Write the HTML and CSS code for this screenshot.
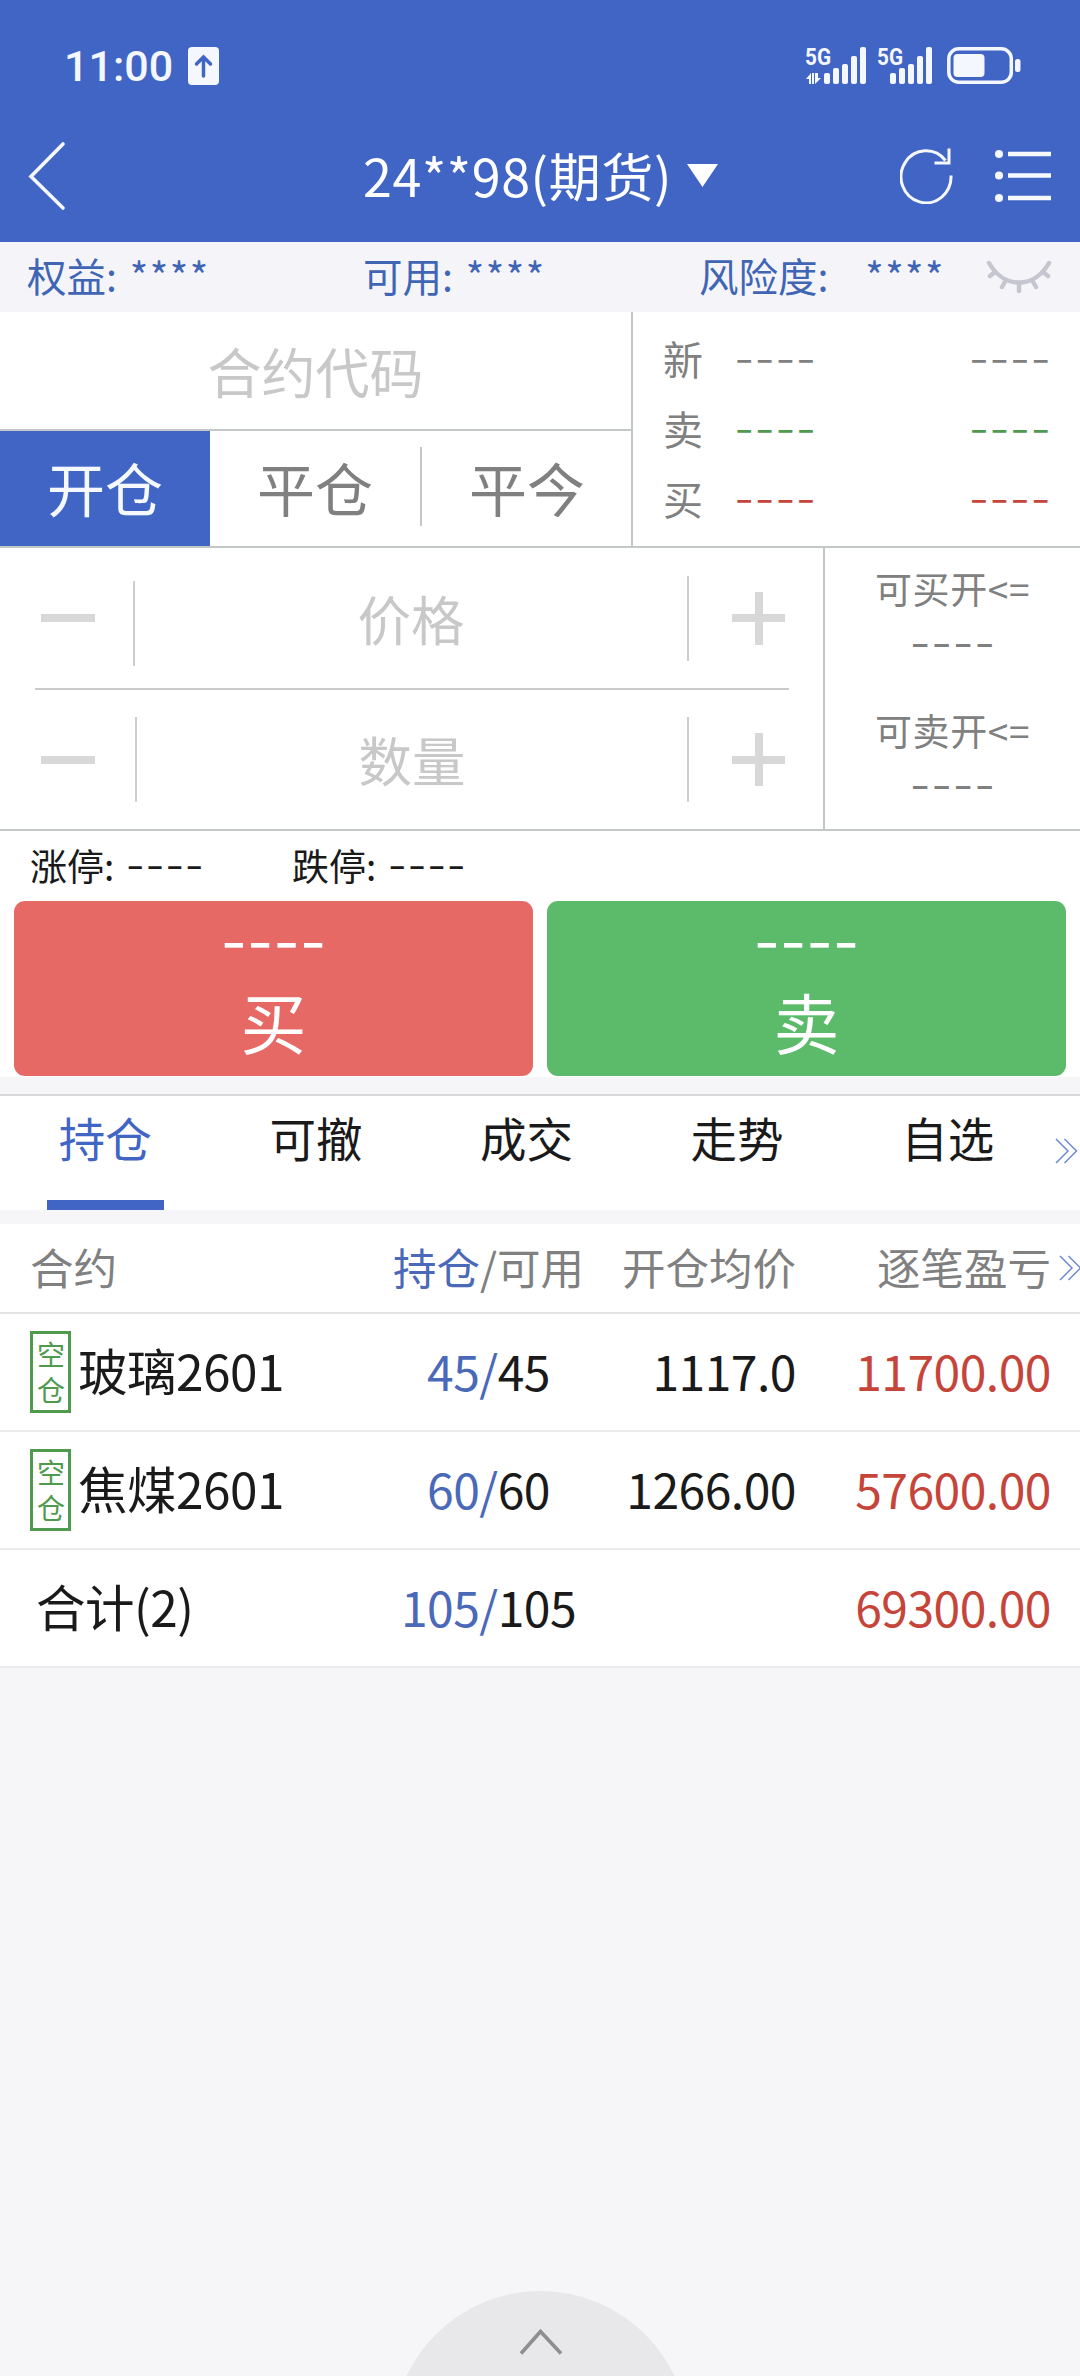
FILE: index.html
```html
<!DOCTYPE html>
<html lang="zh-CN">
<head>
    <meta charset="UTF-8">
    <meta name="viewport" content="width=device-width, initial-scale=1.0">
    <title>期货交易</title>
    <link rel="stylesheet" href="styles.css">
</head>
<body>
    <div class="top">
        <div class="status-bar">
            <span class="time">11:00</span>
            <svg class="upload" width="31" height="38" viewBox="0 0 31 38">
                <rect width="31" height="38" rx="4" fill="#f5f7ff"/>
                <path d="M15.5 29V11M8.5 17l7-7 7 7" fill="none" stroke="#4165c5" stroke-width="3.5" stroke-linecap="round"/>
            </svg>
            <svg class="signal" width="62" height="48" viewBox="0 -10 62 48" fill="#f5f7ff">
                <text class="net" x="0" y="18" textLength="26" lengthAdjust="spacingAndGlyphs">5G</text>
                <path d="M1 32l5-6v11H4v-5zM10 26v11l6-6h-3v-5zM7 26h2v11H7z"/>
                <rect x="19" y="26" width="6" height="11" rx="2"/>
                <rect x="28" y="21" width="6" height="16" rx="2"/>
                <rect x="37" y="17" width="6" height="20" rx="2"/>
                <rect x="46" y="9" width="6" height="28" rx="2"/>
                <rect x="55" y="0" width="6" height="37" rx="2"/>
            </svg>
            <svg class="signal" width="56" height="48" viewBox="0 -10 56 48" fill="#f5f7ff">
                <text class="net" x="0" y="18" textLength="26" lengthAdjust="spacingAndGlyphs">5G</text>
                <rect x="13" y="26" width="6" height="11" rx="2"/>
                <rect x="22" y="21" width="6" height="16" rx="2"/>
                <rect x="31" y="17" width="6" height="20" rx="2"/>
                <rect x="40" y="9" width="6" height="28" rx="2"/>
                <rect x="49" y="0" width="6" height="37" rx="2"/>
            </svg>
            <svg class="battery" width="74" height="38" viewBox="0 0 74 38">
                <rect x="1.8" y="1.8" width="62.5" height="33.5" rx="10" fill="none" stroke="#f5f7ff" stroke-width="3.5"/>
                <rect x="6.5" y="7" width="31" height="23" rx="4" fill="#f5f7ff"/>
                <rect x="68" y="12" width="5.5" height="13" rx="2.5" fill="#f5f7ff"/>
            </svg>
        </div>
        <div class="nav-bar">
            <svg class="back" width="38" height="70" viewBox="0 0 38 70">
                <path d="M35 3L3 35.500L35 67" fill="none" stroke="#f5f9ff" stroke-width="3.6" stroke-linecap="round"/>
            </svg>
            <div class="account">
                <span>24**98(期货)</span>
                <svg width="31" height="23" viewBox="0 0 31 23"><path d="M0 0h31L15.500 23z" fill="#fff"/></svg>
            </div>
            <svg class="refresh" width="54" height="56" viewBox="0 0 54 56" fill="none" stroke="#f5f9ff" stroke-width="3">
                <path d="M51 27.500A25 26 0 1 1 45.500 12.500"/>
                <path d="M49 0.500V15H34.500"/>
            </svg>
            <svg class="menu" width="58" height="56" viewBox="0 0 58 56">
                <g fill="#f5f9ff">
                    <circle cx="5" cy="6" r="4"/>
                    <circle cx="5" cy="27.500" r="4"/>
                    <circle cx="5" cy="50" r="4"/>
                </g>
                <path d="M14 6h43M14 27.500h43M14 50h43" stroke="#f5f9ff" stroke-width="4.500"/>
            </svg>
        </div>
    </div>

    <div class="funds">
        <div class="fund">权益: <span class="mask">****</span></div>
        <div class="fund">可用: <span class="mask">****</span></div>
        <div class="fund risk">风险度: <span class="mask">****</span></div>
        <svg class="eye" width="66" height="34" viewBox="0 0 66 34" fill="none" stroke="#c6c6d1" stroke-width="4.500" stroke-linecap="round">
            <path d="M3 3C18 29 48 29 63 3"/>
            <path d="M9 12l-5 4M20 20l-4 7M33 23v8M46 20l4 7M57 12l5 4"/>
        </svg>
    </div>

    <div class="contract">
        <div class="contract-left">
            <div class="code">合约代码</div>
            <div class="modes">
                <div class="mode active">开仓</div>
                <div class="mode">平仓</div>
                <div class="mode split">平今</div>
            </div>
        </div>
        <div class="quotes">
            <div class="quote"><span>新</span><span class="dash">----</span><span class="dash last">----</span></div>
            <div class="quote green"><span>卖</span><span class="dash">----</span><span class="dash last">----</span></div>
            <div class="quote red"><span>买</span><span class="dash">----</span><span class="dash last">----</span></div>
        </div>
    </div>

    <div class="order">
        <div class="inputs">
            <div class="stepper">
                <div class="minus"></div>
                <div class="value">价格</div>
                <div class="plus"></div>
            </div>
            <div class="stepper amount">
                <div class="minus"></div>
                <div class="value">数量</div>
                <div class="plus"></div>
            </div>
        </div>
        <div class="limits">
            <div class="limit">可买开&lt;=<span class="dash">----</span></div>
            <div class="limit">可卖开&lt;=<span class="dash">----</span></div>
        </div>
    </div>

    <div class="range">
        <div class="range-item">涨停: <span class="dash">----</span></div>
        <div class="range-item">跌停: <span class="dash">----</span></div>
    </div>

    <div class="actions">
        <div class="action buy"><span class="dash">----</span><span class="label">买</span></div>
        <div class="action sell"><span class="dash">----</span><span class="label">卖</span></div>
    </div>

    <div class="tabs">
        <div class="tab active">持仓</div>
        <div class="tab">可撤</div>
        <div class="tab">成交</div>
        <div class="tab">走势</div>
        <div class="tab">自选</div>
        <svg class="more" width="24" height="26" viewBox="0 0 24 26" fill="none" stroke="#6f8bd0" stroke-width="1.500">
            <path d="M1 1l12 12L1 25M9.500 1l12 12-12 12"/>
        </svg>
    </div>

    <div class="positions">
        <div class="row head">
            <div class="name">合约</div>
            <div class="volume"><span class="blue">持仓</span>/可用</div>
            <div class="price">开仓均价</div>
            <div class="profit">逐笔盈亏</div>
            <svg class="more" width="24" height="26" viewBox="0 0 24 26" fill="none" stroke="#6f8bd0" stroke-width="1.500">
                <path d="M1 1l12 12L1 25M9.500 1l12 12-12 12"/>
            </svg>
        </div>
        <div class="row">
            <div class="name"><span class="badge">空仓</span><span class="title">玻璃2601</span></div>
            <div class="volume"><span class="blue">45/</span>45</div>
            <div class="price">1117.0</div>
            <div class="profit">11700.00</div>
        </div>
        <div class="row">
            <div class="name"><span class="badge">空仓</span><span class="title">焦煤2601</span></div>
            <div class="volume"><span class="blue">60/</span>60</div>
            <div class="price">1266.00</div>
            <div class="profit">57600.00</div>
        </div>
        <div class="row total">
            <div class="name"><span class="title">合计(2)</span></div>
            <div class="volume"><span class="blue">105/</span>105</div>
            <div class="price"></div>
            <div class="profit">69300.00</div>
        </div>
    </div>

    <svg class="pull-up" width="297" height="85" viewBox="0 0 297 85">
        <circle cx="148.500" cy="148" r="148" fill="#e8e8ea"/>
        <path d="M129 62.500L148.500 40.500L169 62.500" fill="none" stroke="#8e8e90" stroke-width="3.600"/>
    </svg>
</body>
</html>
```
FILE: styles.css
```css
* {
    box-sizing: border-box;
}

body {
    display: flex;
    flex-direction: column;
    width: 1080px;
    height: 2376px;
    margin: 0;
    overflow: hidden;
    background: #f6f6f9;
    color: #1a1a1a;
    font-family: 'Noto Sans CJK SC', 'Noto Sans', sans-serif;
    font-size: 48px;
    line-height: 1;
    white-space: nowrap;
}

svg {
    display: block;
    flex: none;
}

/* 占位横线 */
.dash {
    font-family: Inter, sans-serif;
    font-size: 45px;
    font-weight: 300;
    line-height: 1;
    letter-spacing: 0.2px;
}

.top {
    height: 242px;
    background: #4165c5;
    color: #fff;
}

.status-bar {
    display: flex;
    align-items: flex-start;
    height: 110px;
    padding: 47px 59px 0 64px;
}

.time {
    width: 124px;
    font-family: Roboto, sans-serif;
    font-size: 43px;
    font-weight: 500;
    line-height: 38px;
    color: #f5f7ff;
}

.upload {
    margin-right: auto;
}

.signal {
    margin-top: -10px;
    margin-right: 10px;
}

.battery {
    margin-left: 4px;
}

.net {
    font-family: Roboto, sans-serif;
    font-size: 24px;
    font-weight: 700;
}

.nav-bar {
    display: flex;
    align-items: center;
    height: 132px;
    padding: 0 28px;
}

.account {
    display: flex;
    align-items: center;
    gap: 15px;
    width: 600px;
    margin-left: 297px;
    padding-bottom: 2px;
    font-size: 52px;
    letter-spacing: 0.6px;
}

.refresh {
    margin-left: -63px;
}

.menu {
    margin-left: auto;
}

.funds {
    display: flex;
    align-items: center;
    height: 70px;
    padding: 0 28px 0 27px;
    background: #f5f5f9;
    color: #4165b5;
    font-size: 39.5px;
}

.fund {
    width: 336px;
    padding-bottom: 5px;
}

.fund.risk {
    flex: 1;
    display: flex;
    justify-content: space-between;
    padding-right: 41px;
}

.mask {
    margin-left: 4px;
    letter-spacing: 1.5px;
}

.contract {
    display: flex;
    height: 236px;
    background: #fff;
    border-bottom: 2px solid #c4c7c8;
}

.contract-left {
    width: 633px;
    border-right: 2px solid #c4c7c8;
}

.code {
    display: flex;
    align-items: center;
    justify-content: center;
    height: 119px;
    border-bottom: 2px solid #c4c7c8;
    color: #c8c8c8;
    font-size: 54px;
}

.modes {
    display: flex;
    height: 115px;
}

.mode {
    display: flex;
    align-items: center;
    justify-content: center;
    width: 210px;
    padding-bottom: 4px;
    color: #808080;
    font-size: 58px;
}

.mode.active {
    background: #4165c5;
    color: #f5f9ff;
}

.mode.split {
    justify-content: flex-start;
}

.mode.split::before {
    content: '';
    flex: none;
    width: 2px;
    height: 79px;
    margin-right: 47px;
    background: #c4c7c8;
}

.quotes {
    flex: 1;
    padding: 11px 29px 0 30px;
}

.quote {
    display: flex;
    align-items: center;
    height: 70px;
    color: #808080;
    font-size: 40px;
}

.quote .dash {
    margin-left: 31px;
}

.quote .last {
    margin-left: auto;
}

.green .dash {
    color: #4f9a4f;
}

.red .dash {
    color: #c6453a;
}

.order {
    display: flex;
    height: 283px;
    background: #fff;
    border-bottom: 2px solid #c4c7c8;
}

.inputs {
    width: 825px;
    padding: 0 34px 0 35px;
    border-right: 2px solid #c4c7c8;
}

.stepper {
    display: flex;
    align-items: center;
    height: 142px;
    border-bottom: 2px solid #c9cacb;
}

.stepper.amount {
    border-bottom: none;
    height: 139px;
}

.minus {
    width: 54px;
    height: 8px;
    margin: 0 38px 0 6px;
    background: #d8d8d8;
}

.value {
    display: flex;
    align-items: center;
    justify-content: center;
    width: 556px;
    height: 95px;
    background:
        linear-gradient(#cdcdcd, #cdcdcd) 0 10px / 2px 85px no-repeat,
        linear-gradient(#cdcdcd, #cdcdcd) 100% 5px / 2px 85px no-repeat;
    color: #c8c8c8;
    font-size: 53.5px;
}

.amount .minus {
    margin-right: 40px;
}

.amount .value {
    width: 554px;
    padding-bottom: 2px;
    background-position: 0 5px, 100% 5px;
}

.plus {
    width: 53px;
    height: 53px;
    margin-left: 43px;
    background:
        linear-gradient(#d8d8d8, #d8d8d8) center / 53px 8px no-repeat,
        linear-gradient(#d8d8d8, #d8d8d8) center / 8px 53px no-repeat;
}

.limits {
    flex: 1;
    padding-top: 22px;
}

.limit {
    display: flex;
    flex-direction: column;
    align-items: center;
    height: 142px;
    color: #808080;
    font-size: 37px;
    letter-spacing: 0.6px;
}

.limit .dash {
    margin-top: 12px;
    font-size: 47px;
}

.range {
    display: flex;
    align-items: center;
    height: 70px;
    padding: 0 0 2px 30px;
    background: #fff;
    font-size: 37px;
}

.range-item {
    display: flex;
    align-items: center;
    width: 262px;
    white-space: pre;
}

.range .dash {
    margin-left: 3px;
    font-size: 43px;
}

.actions {
    display: flex;
    justify-content: space-between;
    height: 176px;
    padding: 0 14px;
    background: #fff;
}

.action {
    display: flex;
    flex-direction: column;
    align-items: center;
    width: 519px;
    height: 175px;
    padding-top: 13px;
    border-radius: 11px;
    color: #fff;
}

.buy {
    background: #e66965;
}

.sell {
    background: #5cbb6b;
}

.action .dash {
    font-size: 57px;
    font-weight: 400;
}

.label {
    margin-top: 16px;
    font-size: 66px;
}

.tabs {
    display: flex;
    height: 116px;
    margin-top: 17px;
    background: #fff;
    border-top: 2px solid #d8d8da;
}

.tab {
    position: relative;
    width: 210.6px;
    padding-top: 18px;
    font-size: 46.5px;
    text-align: center;
}

.tab.active {
    color: #4165c5;
}

.tab.active::after {
    content: '';
    position: absolute;
    left: 47px;
    bottom: 0;
    width: 117px;
    height: 10px;
    background: #4165c5;
}

.tabs .more {
    margin: 42px 0 0 2px;
}

.positions {
    margin-top: 14px;
    background: #fff;
}

.row {
    display: grid;
    grid-template-columns: 386px 205px 205px 255px 1fr;
    align-items: center;
    height: 118px;
    border-bottom: 2px solid #ebebed;
}

.row.head {
    height: 90px;
    border-bottom-color: #e4e4e7;
    color: #808080;
    font-size: 43.5px;
}

.name {
    display: flex;
    align-items: center;
    padding-left: 30px;
    font-size: 49.5px;
}

.head .name {
    font-size: inherit;
}

.title {
    padding-bottom: 5px;
    letter-spacing: -0.5px;
}

.total .name {
    padding-left: 36px;
}

.badge {
    width: 41px;
    height: 82px;
    margin-right: 7px;
    padding: 3px 0 0 4px;
    border: 3px solid #4f9a4f;
    color: #4f9a4f;
    font-size: 28px;
    line-height: 35px;
    white-space: normal;
    word-break: break-all;
}

.volume,
.price,
.profit {
    padding-bottom: 5px;
    letter-spacing: -0.5px;
}

.head .volume,
.head .price,
.head .profit,
.head .name {
    padding-bottom: 2px;
    letter-spacing: 0;
}

.volume {
    text-align: center;
}

.price,
.profit {
    text-align: right;
}

.blue {
    color: #4a69b8;
}

.profit {
    color: #c6453a;
}

.head .profit {
    color: inherit;
}

.head .more {
    margin-left: 8px;
}

/* 底部上拉按钮 */
.pull-up {
    margin: auto auto 0;
}
```
